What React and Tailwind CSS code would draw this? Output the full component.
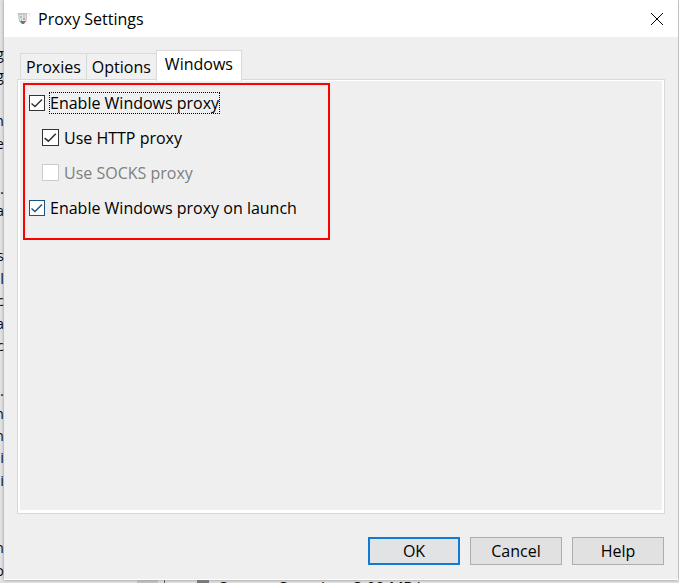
import React, { useState } from "react";

// one entry per line of the log window behind the dialog
const logLines = ["g", "g", "", "n", "e", "", ".", "a", "", "s", "l", "c", "a", "c", "", ".", "n", "n", "i", "i", "", "", "n", "o"];

const tabs = ["Proxies", "Options", "Windows"];

const BackgroundWindow = () => (
  <div aria-hidden="true" className="absolute inset-0 overflow-hidden bg-[#e2e2e2]">
    <div className="absolute inset-y-0 left-0 flex w-1 flex-col items-end justify-between pt-[43px] pb-[3px] text-[15px] leading-5">
      {logLines.map((line, i) => (
        <span key={i} className="h-5">{line}</span>
      ))}
    </div>
    <div className="absolute bottom-0 left-[137px] flex h-[3px] items-start overflow-hidden text-base leading-4 whitespace-nowrap">
      <span className="h-[3px] w-[21px] bg-[#c6c6c6]" />
      <span className="ml-1.5 h-[3px] w-px bg-[#555555]" />
      <span className="ml-8 h-[3px] w-3 bg-[#777777]" />
      <span className="ml-2">Current Speed:</span>
      <span className="ml-6">3.02 MB/</span>
    </div>
  </div>
);

const AppIcon = () => (
  <svg width="16" height="16" viewBox="0 0 16 16" aria-hidden="true">
    <path d="M2.5 3.5 L10.5 3 L10 10 L8 12 H5 L3.5 10 Z" fill="#e4e8e5" stroke="#b9beba" />
    <path d="M1.5 2.5 H11" stroke="#c4c8c5" fill="none" />
    <path d="M11 2.5 L13.5 3 L14 5" stroke="#e0e2e0" fill="none" />
    <path d="M4 5 H6 V7 H4 Z" fill="#7fd0cf" />
    <path d="M7 4 H9 V7 H7 Z" fill="#d9c7df" />
    <path d="M7 7 H9 V9 H7 Z" fill="#ef8fb4" />
    <path d="M5 8 H6 V10 H5 Z" fill="#8fcf9a" />
    <path d="M4 10 H10 L8 13 H6 Z" fill="#747874" />
  </svg>
);

const CheckOption = ({ label, checked, onChange, disabled, indent, focused, accent }) => (
  <label className={`flex h-[35px] items-center gap-[5px] ${indent ? "pl-[17px]" : "pl-1"} ${disabled ? "text-[#808080]" : "text-black"}`}>
    <span className={`grid shrink-0 ${indent ? "size-[17px]" : "size-4"} ${accent ? "text-[#1b5482]" : "text-[#333333]"}`}>
      <input
        type="checkbox"
        checked={checked}
        onChange={onChange}
        disabled={disabled}
        className="peer col-start-1 row-start-1 size-full appearance-none border border-current bg-white outline-none disabled:border-[#cccccc]"
      />
      <svg viewBox="0 0 16 16" aria-hidden="true" className="pointer-events-none invisible col-start-1 row-start-1 size-full peer-checked:visible">
        <path d="M2.5 8.5 L6 11.5 L13 4.5" fill="none" stroke="currentColor" strokeWidth="1.5" />
      </svg>
    </span>
    <span className={focused ? "leading-5 outline-1 outline-dotted outline-black" : "leading-5"}>{label}</span>
  </label>
);

const App = () => {
  const [activeTab, setActiveTab] = useState("Windows");
  const [enabled, setEnabled] = useState(true);
  const [useHttp, setUseHttp] = useState(true);
  const [onLaunch, setOnLaunch] = useState(true);

  return (
    <div className="relative flex min-h-screen flex-col pr-px pb-[3px] pl-1 font-['Open_Sans','Noto_Sans',sans-serif] text-base text-black">
      <BackgroundWindow />
      <div role="dialog" aria-labelledby="dialog-title" className="relative flex grow flex-col border-b border-white bg-[#efefef] shadow-[0_0_3px_#888888]">
        <header className="flex h-[37px] items-center bg-white pr-[14px] pl-3">
          <AppIcon />
          <h1 id="dialog-title" className="ml-1.5 grow leading-5">Proxy Settings</h1>
          <button type="button" aria-label="Close">
            <svg width="14" height="14" viewBox="0 0 14 14" fill="none" stroke="black">
              <path d="M1 1 L13 13 M13 1 L1 13" />
            </svg>
          </button>
        </header>

        <main className="flex grow flex-col px-[13px] pt-[13px]">
          <div role="tablist" className="z-10 -mb-0.5 flex items-end pl-[3px]">
            {tabs.map((tab) => (
              <button
                key={tab}
                type="button"
                role="tab"
                aria-selected={activeTab === tab}
                onClick={() => setActiveTab(tab)}
                className={
                  activeTab === tab
                    ? "h-[31px] border border-b-0 border-[#d9d9d9] bg-white px-2 pb-1 leading-5"
                    : "mb-0.5 h-[26px] border border-r-0 border-b-0 border-[#d9d9d9] bg-[#f0f0f0] px-[5px] leading-5"
                }
              >
                {tab}
              </button>
            ))}
          </div>
          <section role="tabpanel" className="flex grow flex-col border border-[#d9d9d9] bg-white px-0.5 pt-px pb-[3px]">
            <div className="grow bg-[#efefef] pt-0.5 pl-[3px]">
              <div className="w-[307px] border-2 border-[#ff0000] pb-[13px]">
                <CheckOption label="Enable Windows proxy" checked={enabled} onChange={() => setEnabled(!enabled)} focused />
                <CheckOption label="Use HTTP proxy" checked={useHttp} onChange={() => setUseHttp(!useHttp)} indent />
                <CheckOption label="Use SOCKS proxy" checked={false} disabled indent />
                <CheckOption label="Enable Windows proxy on launch" checked={onLaunch} onChange={() => setOnLaunch(!onLaunch)} accent />
              </div>
            </div>
          </section>
        </main>

        <footer className="flex justify-end gap-2.5 px-[14px] pt-[23px] pb-[14px]">
          <button type="button" className="h-7 w-23 border-2 border-[#0f7bd4] bg-[#e1e3e5] leading-5">OK</button>
          <button type="button" className="h-7 w-23 border border-[#adadad] bg-[#e1e1e1] leading-5">Cancel</button>
          <button type="button" className="h-7 w-23 border border-[#adadad] bg-[#e1e1e1] leading-5">Help</button>
        </footer>
      </div>
    </div>
  );
};

export default App;
